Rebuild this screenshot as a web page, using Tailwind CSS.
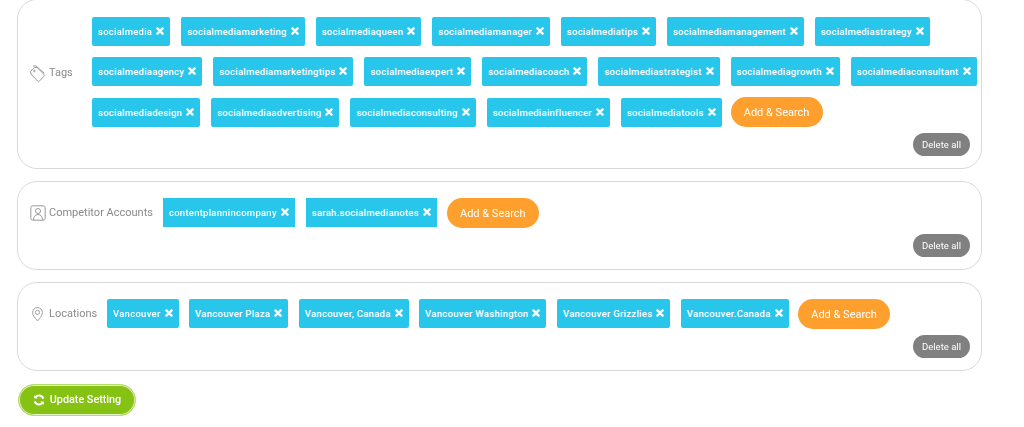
<!DOCTYPE html>
<html>
<head>
  <title>Update Setting</title>
  <script src="https://cdn.jsdelivr.net/npm/@tailwindcss/browser@4"></script>
</head>
<body class="bg-white font-['Roboto',sans-serif] overflow-hidden">
  <div class="w-[965px] ml-[17px] -mt-px blur-[0.4px]">

    <!-- Tags -->
    <section class="border border-[#d9d9d9] rounded-[20px] pt-[17px] pb-[12px] pl-3">
      <div class="flex items-center">
        <div class="w-[62px] pt-[2px] shrink-0 flex items-center gap-[4px] text-[11px] text-[#8a8a8a]">
          <svg class="w-[15px] h-[17px]" viewBox="0 0 15 17" fill="none" stroke="#999" stroke-width="1"><path d="M.7 6.2 4.6 2.4l2.6.2 6.6 6.6a1.5 1.5 0 0 1 0 2.1l-4.2 4.6a1.5 1.5 0 0 1-2.1 0L.9 9z"/><path d="M3 1.2 5.8.8l8.4 7.4"/><circle cx="4.4" cy="6" r=".8"/></svg>
          <span>Tags</span>
        </div>
        <div class="flex flex-wrap items-center gap-x-[11px] gap-y-[11px] -mr-[6px]">
          <span class="flex items-center h-[29px] px-[6px] pt-[2px] gap-[4px] bg-[#29c6ec] rounded-[2px] text-[9.5px] font-medium tracking-[0.25px] text-white">socialmedia<svg class="w-[8px] h-[8px] mb-[3px]" viewBox="0 0 10 10"><path d="M1.8 1.8 5 5M8.2 1.8 5 5M1.8 8.2 5 5M8.2 8.2 5 5" stroke="#fff" stroke-width="3" stroke-linecap="round"/></svg></span>
          <span class="flex items-center h-[29px] px-[6px] pt-[2px] gap-[4px] bg-[#29c6ec] rounded-[2px] text-[9.5px] font-medium tracking-[0.25px] text-white">socialmediamarketing<svg class="w-[8px] h-[8px] mb-[3px]" viewBox="0 0 10 10"><path d="M1.8 1.8 5 5M8.2 1.8 5 5M1.8 8.2 5 5M8.2 8.2 5 5" stroke="#fff" stroke-width="3" stroke-linecap="round"/></svg></span>
          <span class="flex items-center h-[29px] px-[6px] pt-[2px] gap-[4px] bg-[#29c6ec] rounded-[2px] text-[9.5px] font-medium tracking-[0.25px] text-white">socialmediaqueen<svg class="w-[8px] h-[8px] mb-[3px]" viewBox="0 0 10 10"><path d="M1.8 1.8 5 5M8.2 1.8 5 5M1.8 8.2 5 5M8.2 8.2 5 5" stroke="#fff" stroke-width="3" stroke-linecap="round"/></svg></span>
          <span class="flex items-center h-[29px] px-[6px] pt-[2px] gap-[4px] bg-[#29c6ec] rounded-[2px] text-[9.5px] font-medium tracking-[0.25px] text-white">socialmediamanager<svg class="w-[8px] h-[8px] mb-[3px]" viewBox="0 0 10 10"><path d="M1.8 1.8 5 5M8.2 1.8 5 5M1.8 8.2 5 5M8.2 8.2 5 5" stroke="#fff" stroke-width="3" stroke-linecap="round"/></svg></span>
          <span class="flex items-center h-[29px] px-[6px] pt-[2px] gap-[4px] bg-[#29c6ec] rounded-[2px] text-[9.5px] font-medium tracking-[0.25px] text-white">socialmediatips<svg class="w-[8px] h-[8px] mb-[3px]" viewBox="0 0 10 10"><path d="M1.8 1.8 5 5M8.2 1.8 5 5M1.8 8.2 5 5M8.2 8.2 5 5" stroke="#fff" stroke-width="3" stroke-linecap="round"/></svg></span>
          <span class="flex items-center h-[29px] px-[6px] pt-[2px] gap-[4px] bg-[#29c6ec] rounded-[2px] text-[9.5px] font-medium tracking-[0.25px] text-white">socialmediamanagement<svg class="w-[8px] h-[8px] mb-[3px]" viewBox="0 0 10 10"><path d="M1.8 1.8 5 5M8.2 1.8 5 5M1.8 8.2 5 5M8.2 8.2 5 5" stroke="#fff" stroke-width="3" stroke-linecap="round"/></svg></span>
          <span class="flex items-center h-[29px] px-[6px] pt-[2px] gap-[4px] bg-[#29c6ec] rounded-[2px] text-[9.5px] font-medium tracking-[0.25px] text-white">socialmediastrategy<svg class="w-[8px] h-[8px] mb-[3px]" viewBox="0 0 10 10"><path d="M1.8 1.8 5 5M8.2 1.8 5 5M1.8 8.2 5 5M8.2 8.2 5 5" stroke="#fff" stroke-width="3" stroke-linecap="round"/></svg></span>
          <span class="flex items-center h-[29px] px-[6px] pt-[2px] gap-[4px] bg-[#29c6ec] rounded-[2px] text-[9.5px] font-medium tracking-[0.25px] text-white">socialmediaagency<svg class="w-[8px] h-[8px] mb-[3px]" viewBox="0 0 10 10"><path d="M1.8 1.8 5 5M8.2 1.8 5 5M1.8 8.2 5 5M8.2 8.2 5 5" stroke="#fff" stroke-width="3" stroke-linecap="round"/></svg></span>
          <span class="flex items-center h-[29px] px-[6px] pt-[2px] gap-[4px] bg-[#29c6ec] rounded-[2px] text-[9.5px] font-medium tracking-[0.25px] text-white">socialmediamarketingtips<svg class="w-[8px] h-[8px] mb-[3px]" viewBox="0 0 10 10"><path d="M1.8 1.8 5 5M8.2 1.8 5 5M1.8 8.2 5 5M8.2 8.2 5 5" stroke="#fff" stroke-width="3" stroke-linecap="round"/></svg></span>
          <span class="flex items-center h-[29px] px-[6px] pt-[2px] gap-[4px] bg-[#29c6ec] rounded-[2px] text-[9.5px] font-medium tracking-[0.25px] text-white">socialmediaexpert<svg class="w-[8px] h-[8px] mb-[3px]" viewBox="0 0 10 10"><path d="M1.8 1.8 5 5M8.2 1.8 5 5M1.8 8.2 5 5M8.2 8.2 5 5" stroke="#fff" stroke-width="3" stroke-linecap="round"/></svg></span>
          <span class="flex items-center h-[29px] px-[6px] pt-[2px] gap-[4px] bg-[#29c6ec] rounded-[2px] text-[9.5px] font-medium tracking-[0.25px] text-white">socialmediacoach<svg class="w-[8px] h-[8px] mb-[3px]" viewBox="0 0 10 10"><path d="M1.8 1.8 5 5M8.2 1.8 5 5M1.8 8.2 5 5M8.2 8.2 5 5" stroke="#fff" stroke-width="3" stroke-linecap="round"/></svg></span>
          <span class="flex items-center h-[29px] px-[6px] pt-[2px] gap-[4px] bg-[#29c6ec] rounded-[2px] text-[9.5px] font-medium tracking-[0.25px] text-white">socialmediastrategist<svg class="w-[8px] h-[8px] mb-[3px]" viewBox="0 0 10 10"><path d="M1.8 1.8 5 5M8.2 1.8 5 5M1.8 8.2 5 5M8.2 8.2 5 5" stroke="#fff" stroke-width="3" stroke-linecap="round"/></svg></span>
          <span class="flex items-center h-[29px] px-[6px] pt-[2px] gap-[4px] bg-[#29c6ec] rounded-[2px] text-[9.5px] font-medium tracking-[0.25px] text-white">socialmediagrowth<svg class="w-[8px] h-[8px] mb-[3px]" viewBox="0 0 10 10"><path d="M1.8 1.8 5 5M8.2 1.8 5 5M1.8 8.2 5 5M8.2 8.2 5 5" stroke="#fff" stroke-width="3" stroke-linecap="round"/></svg></span>
          <span class="flex items-center h-[29px] px-[6px] pt-[2px] gap-[4px] bg-[#29c6ec] rounded-[2px] text-[9.5px] font-medium tracking-[0.25px] text-white">socialmediaconsultant<svg class="w-[8px] h-[8px] mb-[3px]" viewBox="0 0 10 10"><path d="M1.8 1.8 5 5M8.2 1.8 5 5M1.8 8.2 5 5M8.2 8.2 5 5" stroke="#fff" stroke-width="3" stroke-linecap="round"/></svg></span>
          <span class="flex items-center h-[29px] px-[6px] pt-[2px] gap-[4px] bg-[#29c6ec] rounded-[2px] text-[9.5px] font-medium tracking-[0.25px] text-white">socialmediadesign<svg class="w-[8px] h-[8px] mb-[3px]" viewBox="0 0 10 10"><path d="M1.8 1.8 5 5M8.2 1.8 5 5M1.8 8.2 5 5M8.2 8.2 5 5" stroke="#fff" stroke-width="3" stroke-linecap="round"/></svg></span>
          <span class="flex items-center h-[29px] px-[6px] pt-[2px] gap-[4px] bg-[#29c6ec] rounded-[2px] text-[9.5px] font-medium tracking-[0.25px] text-white">socialmediaadvertising<svg class="w-[8px] h-[8px] mb-[3px]" viewBox="0 0 10 10"><path d="M1.8 1.8 5 5M8.2 1.8 5 5M1.8 8.2 5 5M8.2 8.2 5 5" stroke="#fff" stroke-width="3" stroke-linecap="round"/></svg></span>
          <span class="flex items-center h-[29px] px-[6px] pt-[2px] gap-[4px] bg-[#29c6ec] rounded-[2px] text-[9.5px] font-medium tracking-[0.25px] text-white">socialmediaconsulting<svg class="w-[8px] h-[8px] mb-[3px]" viewBox="0 0 10 10"><path d="M1.8 1.8 5 5M8.2 1.8 5 5M1.8 8.2 5 5M8.2 8.2 5 5" stroke="#fff" stroke-width="3" stroke-linecap="round"/></svg></span>
          <span class="flex items-center h-[29px] px-[6px] pt-[2px] gap-[4px] bg-[#29c6ec] rounded-[2px] text-[9.5px] font-medium tracking-[0.25px] text-white">socialmediainfluencer<svg class="w-[8px] h-[8px] mb-[3px]" viewBox="0 0 10 10"><path d="M1.8 1.8 5 5M8.2 1.8 5 5M1.8 8.2 5 5M8.2 8.2 5 5" stroke="#fff" stroke-width="3" stroke-linecap="round"/></svg></span>
          <span class="flex items-center h-[29px] px-[6px] pt-[2px] gap-[4px] bg-[#29c6ec] rounded-[2px] text-[9.5px] font-medium tracking-[0.25px] text-white">socialmediatools<svg class="w-[8px] h-[8px] mb-[3px]" viewBox="0 0 10 10"><path d="M1.8 1.8 5 5M8.2 1.8 5 5M1.8 8.2 5 5M8.2 8.2 5 5" stroke="#fff" stroke-width="3" stroke-linecap="round"/></svg></span>
          <button class="-ml-[2px] w-[92px] h-[30px] pt-[2px] rounded-full bg-[#ffa02e] text-white text-[11px]">Add &amp; Search</button>
        </div>
      </div>
      <div class="flex justify-end pr-[11px] mt-[6px]">
        <button class="w-[57px] h-[23px] pt-px rounded-full bg-[#808080] text-white text-[9.5px]">Delete all</button>
      </div>
    </section>

    <!-- Competitor Accounts -->
    <section class="border border-[#d9d9d9] rounded-[20px] mt-3 pt-[16px] pb-[12px] pl-3">
      <div class="flex items-start">
        <div class="w-[133px] h-[29px] pt-[1px] shrink-0 flex items-center gap-[3px] text-[11px] text-[#8a8a8a]">
          <svg class="w-[16px] h-[16px]" viewBox="0 0 16 16" fill="none" stroke="#999" stroke-width="1"><rect x=".8" y=".8" width="14.4" height="14.4" rx="2"/><circle cx="8" cy="6" r="2.5"/><path d="M3.5 15c0-3.5 1.8-5.5 4.5-5.5s4.5 2 4.5 5.5"/></svg>
          <span>Competitor Accounts</span>
        </div>
        <div class="flex flex-wrap items-start gap-x-[11px]">
          <span class="flex items-center h-[29px] px-[6px] pt-[2px] gap-[4px] bg-[#29c6ec] text-[9.5px] font-medium tracking-[0.25px] text-white">contentplannincompany<svg class="w-[8px] h-[8px] mb-[3px]" viewBox="0 0 10 10"><path d="M1.8 1.8 5 5M8.2 1.8 5 5M1.8 8.2 5 5M8.2 8.2 5 5" stroke="#fff" stroke-width="3" stroke-linecap="round"/></svg></span>
          <span class="flex items-center h-[29px] px-[6px] pt-[2px] gap-[4px] bg-[#29c6ec] text-[9.5px] font-medium tracking-[0.25px] text-white">sarah.socialmedianotes<svg class="w-[8px] h-[8px] mb-[3px]" viewBox="0 0 10 10"><path d="M1.8 1.8 5 5M8.2 1.8 5 5M1.8 8.2 5 5M8.2 8.2 5 5" stroke="#fff" stroke-width="3" stroke-linecap="round"/></svg></span>
          <button class="-ml-px w-[92px] h-[30px] pt-[2px] rounded-full bg-[#ffa02e] text-white text-[11px]">Add &amp; Search</button>
        </div>
      </div>
      <div class="flex justify-end pr-[11px] mt-[6px]">
        <button class="w-[57px] h-[23px] pt-px rounded-full bg-[#808080] text-white text-[9.5px]">Delete all</button>
      </div>
    </section>

    <!-- Locations -->
    <section class="border border-[#d9d9d9] rounded-[20px] mt-3 pt-[16px] pb-[12px] pl-3">
      <div class="flex items-start">
        <div class="w-[77px] h-[29px] pt-[1px] shrink-0 flex items-center gap-[4px] text-[11px] text-[#8a8a8a]">
          <svg class="w-[15px] h-[16px]" viewBox="0 0 16 16" fill="none" stroke="#999" stroke-width="1"><path d="M8 15.3C5 12 2.8 9.3 2.8 6.3a5.2 5.2 0 0 1 10.4 0c0 3-2.2 5.7-5.2 9z"/><circle cx="8" cy="6.2" r="2.2"/></svg>
          <span>Locations</span>
        </div>
        <div class="flex flex-wrap items-start gap-x-[10.5px]">
          <span class="flex items-center h-[29px] px-[6px] pt-[2px] gap-[4px] bg-[#29c6ec] rounded-[2px] text-[9.5px] font-medium tracking-[0.28px] text-white">Vancouver<svg class="w-[8px] h-[8px] mb-[3px]" viewBox="0 0 10 10"><path d="M1.8 1.8 5 5M8.2 1.8 5 5M1.8 8.2 5 5M8.2 8.2 5 5" stroke="#fff" stroke-width="3" stroke-linecap="round"/></svg></span>
          <span class="flex items-center h-[29px] px-[6px] pt-[2px] gap-[4px] bg-[#29c6ec] rounded-[2px] text-[9.5px] font-medium tracking-[0.28px] text-white">Vancouver Plaza<svg class="w-[8px] h-[8px] mb-[3px]" viewBox="0 0 10 10"><path d="M1.8 1.8 5 5M8.2 1.8 5 5M1.8 8.2 5 5M8.2 8.2 5 5" stroke="#fff" stroke-width="3" stroke-linecap="round"/></svg></span>
          <span class="flex items-center h-[29px] px-[6px] pt-[2px] gap-[4px] bg-[#29c6ec] rounded-[2px] text-[9.5px] font-medium tracking-[0.28px] text-white">Vancouver, Canada<svg class="w-[8px] h-[8px] mb-[3px]" viewBox="0 0 10 10"><path d="M1.8 1.8 5 5M8.2 1.8 5 5M1.8 8.2 5 5M8.2 8.2 5 5" stroke="#fff" stroke-width="3" stroke-linecap="round"/></svg></span>
          <span class="flex items-center h-[29px] px-[6px] pt-[2px] gap-[4px] bg-[#29c6ec] rounded-[2px] text-[9.5px] font-medium tracking-[0.28px] text-white">Vancouver Washington<svg class="w-[8px] h-[8px] mb-[3px]" viewBox="0 0 10 10"><path d="M1.8 1.8 5 5M8.2 1.8 5 5M1.8 8.2 5 5M8.2 8.2 5 5" stroke="#fff" stroke-width="3" stroke-linecap="round"/></svg></span>
          <span class="flex items-center h-[29px] px-[6px] pt-[2px] gap-[4px] bg-[#29c6ec] rounded-[2px] text-[9.5px] font-medium tracking-[0.28px] text-white">Vancouver Grizzlies<svg class="w-[8px] h-[8px] mb-[3px]" viewBox="0 0 10 10"><path d="M1.8 1.8 5 5M8.2 1.8 5 5M1.8 8.2 5 5M8.2 8.2 5 5" stroke="#fff" stroke-width="3" stroke-linecap="round"/></svg></span>
          <span class="flex items-center h-[29px] px-[6px] pt-[2px] gap-[4px] bg-[#29c6ec] rounded-[2px] text-[9.5px] font-medium tracking-[0.28px] text-white">Vancouver.Canada<svg class="w-[8px] h-[8px] mb-[3px]" viewBox="0 0 10 10"><path d="M1.8 1.8 5 5M8.2 1.8 5 5M1.8 8.2 5 5M8.2 8.2 5 5" stroke="#fff" stroke-width="3" stroke-linecap="round"/></svg></span>
          <button class="-ml-px w-[92px] h-[30px] pt-[2px] rounded-full bg-[#ffa02e] text-white text-[11px]">Add &amp; Search</button>
        </div>
      </div>
      <div class="flex justify-end pr-[11px] mt-[6px]">
        <button class="w-[57px] h-[23px] pt-px rounded-full bg-[#808080] text-white text-[9.5px]">Delete all</button>
      </div>
    </section>

    <!-- Update button -->
    <button class="mt-[13px] ml-px w-[118px] h-[32px] flex items-center justify-center gap-[5px] rounded-full bg-[#86c214] border border-[#b5dc6c] shadow-[inset_0_0_0_1px_#e4f2c8] text-white text-[10.8px] font-medium">
      <svg class="w-[12px] h-[12px]" viewBox="0 0 12 12" fill="none" stroke="#fff" stroke-width="2"><path d="M10.3 4.6A4.5 4.5 0 0 0 2.4 3.4"/><path d="M1.7 7.4a4.5 4.5 0 0 0 7.9 1.2"/><path d="M1.2 1v3.6h3.4z" fill="#fff" stroke="none"/><path d="M10.8 11V7.4H7.4z" fill="#fff" stroke="none"/></svg>
      Update Setting
    </button>
  </div>
</body>
</html>
